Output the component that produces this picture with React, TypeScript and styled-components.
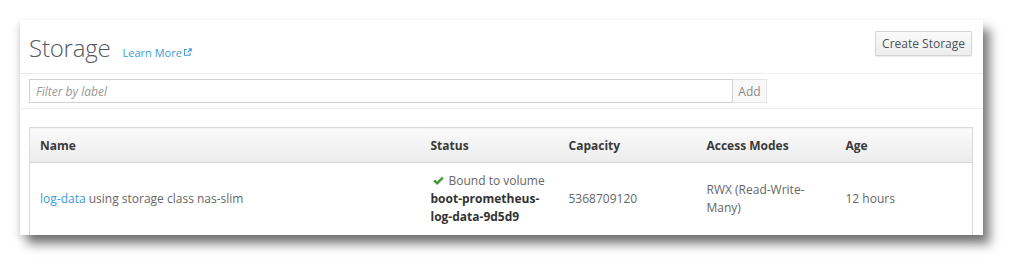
import React from "react";
import styled, { createGlobalStyle } from "styled-components";

const GlobalStyle = createGlobalStyle`
  html, body {
    margin: 0;
    padding: 0;
    background: #ffffff;
  }
  body {
    font-family: "Open Sans", "Liberation Sans", sans-serif;
    font-size: 12px;
    color: #5a5a5a;
  }
`;

const Page = styled.div`
  padding: 20px 39px 40px 20px;
`;

const Card = styled.section`
  width: 963px;
  height: 215px;
  background: #fff;
  overflow: hidden;
  box-sizing: border-box;
  padding: 0 11px 0 9px;
  box-shadow: 7px 9px 10px rgba(0, 0, 0, 0.5), -2px 3px 6px rgba(0, 0, 0, 0.12);
`;

const Header = styled.div`
  display: flex;
  align-items: center;
  justify-content: space-between;
  height: 53px;
  margin: 0 -11px 0 -9px;
  padding: 0 11px 0 9px;
  border-bottom: 1px solid #ececec;
`;

const TitleGroup = styled.div`
  display: flex;
  align-items: baseline;
  gap: 12px;
  padding-top: 1px;
`;

const Title = styled.h1`
  margin: 0;
  font-size: 24px;
  font-weight: 300;
  color: #55595e;
  letter-spacing: -0.2px;
`;

const LearnMore = styled.a`
  font-size: 11px;
  color: #3b9ad6;
  text-decoration: none;
  display: inline-flex;
  align-items: center;
  gap: 2px;
`;

const Button = styled.button`
  font-family: "Open Sans", "Liberation Sans", sans-serif;
  font-size: 12px;
  color: #4d5258;
  background: linear-gradient(#fafafa, #ededed);
  border: 1px solid #d4d4d4;
  border-radius: 1px;
  height: 25px;
  padding: 0 6px;
  margin-bottom: 7px;
  box-shadow: 0 1px 1px rgba(0, 0, 0, 0.08);
`;

const FilterBar = styled.div`
  display: flex;
  align-items: center;
  height: 34px;
  margin: 0 -11px 0 -9px;
  padding: 0 11px 0 9px;
  border-bottom: 1px solid #ececec;
`;

const FilterInput = styled.input`
  box-sizing: border-box;
  width: 704px;
  height: 24px;
  border: 1px solid #d1d1d1;
  padding: 0 6px;
  font-family: "Open Sans", "Liberation Sans", sans-serif;
  font-size: 12px;
  &::placeholder {
    color: #9a9a9a;
    font-style: italic;
  }
`;

const AddButton = styled.button`
  box-sizing: border-box;
  height: 24px;
  width: 34px;
  border: 1px solid #e3e3e3;
  border-left: none;
  background: #f8f8f8;
  color: #8a8a8a;
  font-family: "Open Sans", "Liberation Sans", sans-serif;
  font-size: 12px;
  padding: 0;
`;

const Table = styled.table`
  margin-top: 18px;
  width: 943px;
  border-collapse: collapse;
  table-layout: fixed;
  border: 1px solid #dadada;
`;

const Th = styled.th<{ w: number }>`
  box-sizing: border-box;
  width: ${(p) => p.w}px;
  height: 35px;
  text-align: left;
  font-weight: 700;
  color: #3a3a3a;
  padding: 0 10px;
  background: linear-gradient(#fafafa, #ececec);
  border-bottom: 1px solid #d6d6d6;
`;

const Td = styled.td`
  padding: 9px 10px;
  line-height: 18px;
  vertical-align: middle;
  color: #666;
`;

const Link = styled.a`
  color: #3b9ad6;
  text-decoration: none;
`;

const Strong = styled.div`
  font-weight: 700;
  color: #333;
`;

const Check = styled.span`
  color: #3f9c35;
  margin-right: 5px;
  margin-left: 2px;
  display: inline-flex;
  vertical-align: -1px;
`;

const ExternalIcon = () => (
  <svg width="8" height="8" viewBox="0 0 10 10" fill="none" stroke="#3b9ad6" strokeWidth="1.3">
    <path d="M6 1h3v3M9 1L4.5 5.5M7.5 6v3h-7v-7h3" />
  </svg>
);

const CheckIcon = () => (
  <svg width="11" height="10" viewBox="0 0 10 9" fill="#3f9c35">
    <path d="M0.3 4.7L1.9 3.1L3.8 5L8.1 0.7L9.7 2.3L3.8 8.2z" />
  </svg>
);

const columns = [
  { label: "Name", w: 391 },
  { label: "Status", w: 138 },
  { label: "Capacity", w: 138 },
  { label: "Access Modes", w: 139 },
  { label: "Age", w: 137 },
];

export default function App() {
  return (
    <Page>
      <GlobalStyle />
      <Card>
        <Header>
          <TitleGroup>
            <Title>Storage</Title>
            <LearnMore href="#">
              Learn More
              <ExternalIcon />
            </LearnMore>
          </TitleGroup>
          <Button>Create Storage</Button>
        </Header>
        <FilterBar>
          <FilterInput placeholder="Filter by label" />
          <AddButton>Add</AddButton>
        </FilterBar>
        <Table>
          <thead>
            <tr>
              {columns.map((c) => (
                <Th key={c.label} w={c.w}>
                  {c.label}
                </Th>
              ))}
            </tr>
          </thead>
          <tbody>
            <tr>
              <Td>
                <Link href="#">log-data</Link> using storage class nas-slim
              </Td>
              <Td>
                <div>
                  <Check>
                    <CheckIcon />
                  </Check>
                  Bound to volume
                </div>
                <Strong>boot-prometheus-log-data-9d5d9</Strong>
              </Td>
              <Td>5368709120</Td>
              <Td>RWX (Read-Write-Many)</Td>
              <Td>12 hours</Td>
            </tr>
          </tbody>
        </Table>
      </Card>
    </Page>
  );
}
